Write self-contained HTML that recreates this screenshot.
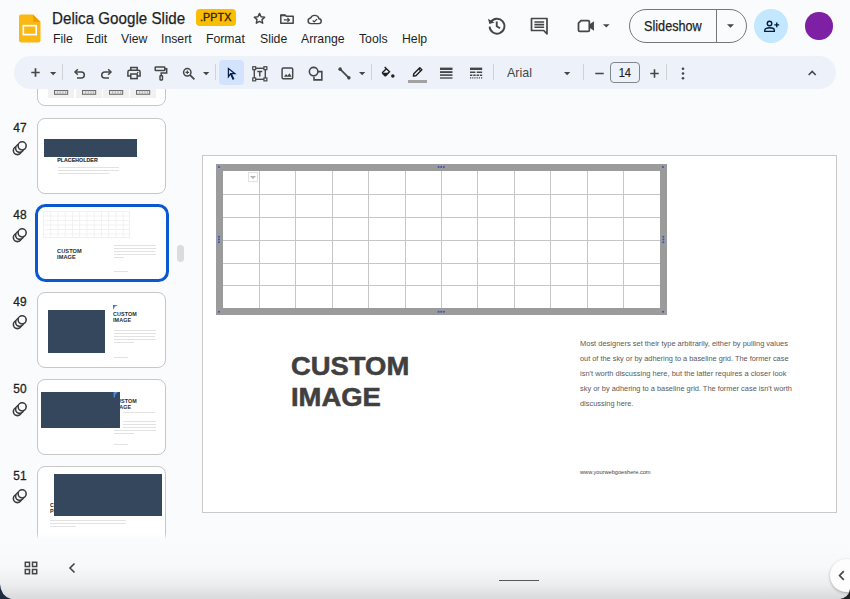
<!DOCTYPE html>
<html>
<head>
<meta charset="utf-8">
<title>Delica Google Slide</title>
<style>
*{box-sizing:border-box;margin:0;padding:0}
html,body{width:850px;height:599px;overflow:hidden}
body{background:#f9fbfd;font-family:"Liberation Sans",sans-serif;position:relative;color:#1f1f1f}
.abs{position:absolute}
svg{position:absolute;overflow:visible}
/* header */
#title{left:52.400px;top:7px;font-size:16.300px;line-height:22px;color:#1f1f1f;white-space:nowrap;transform-origin:0 50%;transform:scaleX(.931);-webkit-text-stroke:.25px #1f1f1f}
#badge{left:195.500px;top:9.300px;width:40.500px;height:17px;background:#fbbc04;border-radius:4px;font-size:10.700px;line-height:17.500px;text-align:center;color:#2e2400;letter-spacing:.15px;-webkit-text-stroke:.35px #2e2400}
.menu{top:31px;font-size:13px;line-height:16px;color:#1f1f1f;white-space:nowrap;transform-origin:0 50%;transform:scaleX(.942)}
#toolbar{left:14px;top:56px;width:822px;height:33px;border-radius:16.500px;background:#edf2fa}
.sep{top:64px;width:1px;height:16px;background:#cfd3d8}
#sel{left:219.400px;top:60.300px;width:24.800px;height:24.800px;border-radius:4px;background:#d3e3fd}
#fontname{left:506.800px;top:65px;font-size:13.500px;line-height:16px;color:#444746;transform-origin:0 50%;transform:scaleX(.925)}
#fsize{left:610px;top:62px;width:29.500px;height:21px;border:1px solid #80868b;border-radius:4px;font-size:12.300px;line-height:20px;text-align:center;color:#1f1f1f;-webkit-text-stroke:.2px #1f1f1f}
#fsize span{display:inline-block;transform:scaleX(.9)}
#slideshow{left:629px;top:9px;width:118px;height:34px;border:1px solid #747775;border-radius:17px}
#slideshow span{position:absolute;left:14px;top:8px;font-size:14px;line-height:16px;color:#1f1f1f;transform-origin:0 50%;transform:scaleX(.905);white-space:nowrap;-webkit-text-stroke:.25px #1f1f1f}
#slideshow i{position:absolute;left:86px;top:0;width:1px;height:32px;background:#747775}
#share{left:753.800px;top:8.800px;width:34.400px;height:34.400px;border-radius:50%;background:#c2e7ff}
#avatar{left:805.400px;top:12.300px;width:27.400px;height:27.400px;border-radius:50%;background:#7d20a4}
/* filmstrip */
.thumb{left:36.600px;width:129.800px;height:76px;background:#fff;border:1px solid #c7c7c7;border-radius:8px;overflow:hidden}
.num{left:13.200px;font-size:11.900px;line-height:14px;color:#1f1f1f;-webkit-text-stroke:.3px #1f1f1f;letter-spacing:.3px}
.tt{font-weight:bold;color:#2b2b2b;white-space:nowrap;letter-spacing:.1px;line-height:6px;height:6px;transform-origin:0 0;transform:scaleX(1.120)}
.tl{height:1px;background:#e2e2e2}
#tgrid{background-image:linear-gradient(to right,#f0f0f0 1px,transparent 1px),linear-gradient(to bottom,#f0f0f0 1px,transparent 1px);background-size:7.250px 4.500px;border-right:1px solid #f0f0f0;border-bottom:1px solid #f0f0f0}
/* canvas */
#slide{left:202px;top:155px;width:635px;height:358px;background:#fff;border:1px solid #c9c9c9}
#tbl{left:216px;top:164px;width:450.500px;height:151px;background:#9b9b9b}
#tblgrid{left:223px;top:170.600px;width:437px;height:137.800px;background:#fff;overflow:hidden}
#tblgrid i{position:absolute;background:#c6c6c6}
.hd{width:1.800px;height:1.800px;background:#3c5cb0}
#heading{left:291px;top:351.200px;-webkit-text-stroke:.55px #404040;font-size:26.500px;line-height:31.200px;font-weight:bold;color:#404040;white-space:nowrap;transform-origin:0 0;transform:scaleX(1.034)}
.para{left:580px;font-size:7.400px;line-height:10px;color:#595959;white-space:nowrap;transform-origin:0 50%}
#url{left:580px;top:467.500px;font-size:5.650px;line-height:8px;color:#444;white-space:nowrap}
#shade{left:0;top:540px;width:850px;height:59px;background:linear-gradient(to bottom,rgba(0,0,0,0) 0,rgba(0,0,0,.012) 45%,rgba(0,0,0,.055) 75%,rgba(0,0,0,.135) 100%)}
#fab{left:829.500px;top:558.500px;width:33px;height:33px;border-radius:50%;background:#fdfdfd;box-shadow:0 1px 3px rgba(0,0,0,.28)}
</style>
</head>
<body>
<!-- HEADER -->
<div class="abs" id="title">Delica Google Slide</div>
<div class="abs" id="badge">.PPTX</div>
<div class="abs menu" style="left:53px">File</div>
<div class="abs menu" style="left:86.2px">Edit</div>
<div class="abs menu" style="left:121px">View</div>
<div class="abs menu" style="left:160.5px">Insert</div>
<div class="abs menu" style="left:206.3px">Format</div>
<div class="abs menu" style="left:259.6px">Slide</div>
<div class="abs menu" style="left:300.5px">Arrange</div>
<div class="abs menu" style="left:359.2px">Tools</div>
<div class="abs menu" style="left:401.6px">Help</div>

<!-- logo -->
<svg style="left:18.500px;top:13.500px" width="21.500" height="29" viewBox="0 0 23 30">
 <path d="M2.5 0H15L23 8V27.5Q23 30 20.500 30H2.500Q0 30 0 27.500V2.500Q0 0 2.500 0Z" fill="#fbb712"/>
 <path d="M15 0L23 8H17Q15 8 15 6Z" fill="#ee9d06"/>
 <rect x="4.600" y="12" width="13.800" height="9.500" fill="none" stroke="#fff" stroke-width="1.800"/>
</svg>
<!-- star -->
<svg style="left:252.200px;top:11.400px" width="15" height="15" viewBox="0 0 24 24"><path d="M12 3.800l2.500 5.300 5.800.700-4.300 4 1.100 5.700L12 16.600l-5.100 2.900 1.100-5.700-4.300-4 5.800-.7z" fill="none" stroke="#444746" stroke-width="2.300" stroke-linejoin="round"/></svg>
<!-- move folder -->
<svg style="left:280px;top:14px" width="14" height="10" viewBox="0 0 14 10"><path d="M.8 1h4.200l1.300 1.300h6.900v6.900H.8z" fill="none" stroke="#444746" stroke-width="1.500" stroke-linejoin="round"/><path d="M.8 1.500h4.500" stroke="#444746" stroke-width="1.600"/><path d="M3.800 5.900h5.400M7.400 3.900l2 2-2 2" fill="none" stroke="#444746" stroke-width="1.300"/></svg>
<!-- cloud done -->
<svg style="left:306.600px;top:14.600px" width="15.600" height="9.400" viewBox="0 0 15.600 10" preserveAspectRatio="none"><path d="M4 9.200a3 3 0 0 1-.3-5.970 4.300 4.300 0 0 1 8.300.8 2.600 2.600 0 0 1-.2 5.170z" fill="none" stroke="#444746" stroke-width="1.500" stroke-linejoin="round"/><path d="M5.700 5.800l1.500 1.500 2.800-2.900" fill="none" stroke="#444746" stroke-width="1.300"/></svg>
<!-- history -->
<svg style="left:486.300px;top:15.200px" width="21.500" height="21.500" viewBox="0 0 24 24"><path d="M5.200 8.200A8.300 8.300 0 1 1 4 13" fill="none" stroke="#444746" stroke-width="2.100"/><path d="M2.200 4.200l1.600 5.800 5.700-1.500z" fill="#444746"/><path d="M12 7.300v5.200l3.700 2.300" fill="none" stroke="#444746" stroke-width="2.100"/></svg>
<!-- comment -->
<svg style="left:530px;top:16.500px" width="19" height="19" viewBox="0 0 19 19"><path d="M1.500 1.500h15.500v15.300l-3.300-3.300H1.500z" fill="none" stroke="#444746" stroke-width="1.700" stroke-linejoin="round"/><path d="M4.400 5h9.700M4.400 7.600h9.700M4.400 10.200h9.700" stroke="#444746" stroke-width="1.600"/></svg>
<!-- camera -->
<svg style="left:575.500px;top:16px" width="20" height="20" viewBox="0 0 24 24"><path d="M6 5.500h8.500q1.500 0 1.500 1.500v10q0 1.500-1.500 1.500H4.500q-1.500 0-1.500-1.500V8.500z" fill="none" stroke="#444746" stroke-width="2.100" stroke-linejoin="round"/><path d="M16 10.300l5.500-4v11.400l-5.500-4z" fill="#444746"/></svg>
<svg style="left:603px;top:24px" width="6.600" height="3.600" viewBox="0 0 10 5"><path d="M0 0h10L5 5z" fill="#444746"/></svg>
<!-- slideshow dropdown -->
<svg style="left:727.200px;top:24px" width="7" height="3.800" viewBox="0 0 10 5"><path d="M0 0h10L5 5z" fill="#444746"/></svg>
<div class="abs" id="slideshow"><span>Slideshow</span><i></i></div>
<div class="abs" id="share"></div>
<div class="abs" id="avatar"></div>
<!-- share person add -->
<svg style="left:762.800px;top:17.600px" width="16.500" height="16.500" viewBox="0 0 24 24"><circle cx="9.500" cy="8" r="3.300" fill="none" stroke="#001d35" stroke-width="2"/><path d="M2.500 19.500v-1.500c0-2.500 4-3.800 7-3.800s7 1.300 7 3.800v1.500z" fill="none" stroke="#001d35" stroke-width="2" stroke-linejoin="round"/><path d="M20 6.500v7M16.500 10h7" stroke="#001d35" stroke-width="2"/></svg>

<!-- TOOLBAR -->
<div class="abs" id="toolbar"></div>
<div class="abs" id="sel"></div>
<div class="abs sep" style="left:62px"></div>
<div class="abs sep" style="left:215px"></div>
<div class="abs sep" style="left:371px"></div>
<div class="abs sep" style="left:493px"></div>
<div class="abs sep" style="left:583px"></div>
<div class="abs sep" style="left:666px"></div>
<div class="abs" id="fontname">Arial</div>
<div class="abs" id="fsize"><span>14</span></div>

<!-- plus -->
<svg style="left:30.500px;top:68.300px" width="9" height="9" viewBox="0 0 10 10"><path d="M5 .3v9.400M.3 5h9.400" stroke="#444746" stroke-width="1.900"/></svg>
<svg style="left:50.4px;top:72.300px" width="6.300" height="3.400" viewBox="0 0 10 5"><path d="M0 0h10L5 5z" fill="#444746"/></svg>
<!-- undo -->
<svg style="left:73px;top:67px" width="13" height="13" viewBox="0 0 13 13"><path d="M2 5h6.300a3 3 0 0 1 0 6H4" fill="none" stroke="#444746" stroke-width="1.500"/><path d="M4.800 2.200L2 5l2.800 2.800" fill="none" stroke="#444746" stroke-width="1.500"/></svg>
<!-- redo -->
<svg style="left:100px;top:67px" width="13" height="13" viewBox="0 0 13 13"><path d="M11 5H4.700a3 3 0 0 0 0 6H9" fill="none" stroke="#444746" stroke-width="1.500"/><path d="M8.200 2.200L11 5 8.200 7.800" fill="none" stroke="#444746" stroke-width="1.500"/></svg>
<!-- print -->
<svg style="left:127px;top:66px" width="14" height="14" viewBox="0 0 14 14"><path d="M3.800 4.300V1.500h6.400v2.800" fill="none" stroke="#444746" stroke-width="1.500"/><path d="M3.500 10H.9V6q0-1.700 1.700-1.700h8.800q1.700 0 1.700 1.700v4h-2.600" fill="none" stroke="#444746" stroke-width="1.500"/><rect x="3.800" y="8" width="6.400" height="4.600" fill="none" stroke="#444746" stroke-width="1.500"/><circle cx="10.700" cy="6.500" r=".8" fill="#444746"/></svg>
<!-- paint format -->
<svg style="left:154px;top:66px" width="14" height="15" viewBox="0 0 14 15"><rect x="1.200" y="1" width="9.600" height="3.600" rx=".6" fill="none" stroke="#444746" stroke-width="1.500"/><path d="M10.800 2.800h1.900v4.100H7.200v3" fill="none" stroke="#444746" stroke-width="1.500"/><rect x="6" y="9.700" width="2.500" height="4.300" rx=".4" fill="none" stroke="#444746" stroke-width="1.400"/></svg>
<!-- zoom -->
<svg style="left:181.500px;top:66.500px" width="14" height="14" viewBox="0 0 14 14"><circle cx="5.300" cy="5.300" r="3.700" fill="none" stroke="#444746" stroke-width="1.500"/><path d="M8.100 8.100l4.300 4.300" stroke="#444746" stroke-width="1.800"/><path d="M5.300 3.500v3.600M3.500 5.300h3.600" stroke="#444746" stroke-width="1.200"/></svg>
<svg style="left:203.4px;top:72.300px" width="6.300" height="3.400" viewBox="0 0 10 5"><path d="M0 0h10L5 5z" fill="#444746"/></svg>
<!-- cursor -->
<svg style="left:224px;top:65.700px" width="15.200" height="15.200" viewBox="0 -960 960 960"><path d="m320-410 79-110h170L320-716v306ZM551-80 406-392 240-160v-720l560 440H516l144 309-109 51Z" fill="#041e49"/></svg>
<!-- textbox -->
<svg style="left:251.700px;top:65.800px" width="15.600" height="15.600" viewBox="0 0 17 17"><rect x="2.500" y="2.500" width="12" height="12" fill="none" stroke="#444746" stroke-width="1.500"/><g fill="#edf2fa" stroke="#444746" stroke-width="1.300"><rect x=".8" y=".8" width="3.200" height="3.200"/><rect x="13" y=".8" width="3.200" height="3.200"/><rect x=".8" y="13" width="3.200" height="3.200"/><rect x="13" y="13" width="3.200" height="3.200"/></g><path d="M5.800 6h5.400M8.500 6v5.500" stroke="#444746" stroke-width="1.600"/></svg>
<!-- image -->
<svg style="left:280.700px;top:66.800px" width="12.800" height="12.800" viewBox="0 0 14 14"><rect x="1.200" y="1.200" width="11.600" height="11.600" rx="1.300" fill="none" stroke="#444746" stroke-width="1.600"/><path d="M3.200 10.600l2.300-3 1.700 2 2.100-2.800 2.400 3.800z" fill="#444746"/></svg>
<!-- shape -->
<svg style="left:308.300px;top:66px" width="15.500" height="15.500" viewBox="0 0 16 16"><path d="M9.300 5.800h5v8.500H6.200v-3" fill="none" stroke="#444746" stroke-width="1.600"/><circle cx="5.800" cy="5.800" r="4.400" fill="#edf2fa" stroke="#444746" stroke-width="1.600"/></svg>
<!-- line -->
<svg style="left:337.500px;top:66.700px" width="13" height="13" viewBox="0 0 14 14"><path d="M2.300 2.300l9.400 9.400" stroke="#444746" stroke-width="1.900"/><circle cx="2.300" cy="2.300" r="1.900" fill="#444746"/><circle cx="11.700" cy="11.700" r="1.900" fill="#444746"/></svg>
<svg style="left:359.4px;top:72.300px" width="6.300" height="3.400" viewBox="0 0 10 5"><path d="M0 0h10L5 5z" fill="#444746"/></svg>
<!-- fill -->
<svg style="left:382px;top:65.500px" width="12.500" height="12.500" viewBox="0 0 15 15"><path d="M3.200 1.200l5.800 5.800-4.300 4.300q-.7.700-1.400 0L.9 8.900q-.7-.7 0-1.400l4-4" fill="none" stroke="#1f1f1f" stroke-width="1.700"/><path d="M1 8.200h7L4.700 11.500q-.7.600-1.400 0z" fill="#1f1f1f"/><circle cx="13" cy="12.100" r="2.100" fill="#1f1f1f"/></svg>
<!-- pen -->
<svg style="left:411.500px;top:66.200px" width="11.500" height="11.500" viewBox="0 0 14 14"><path d="M1.700 12.300l.5-3 7.300-7.300 2.500 2.500-7.300 7.300z" fill="none" stroke="#1f1f1f" stroke-width="1.700" stroke-linejoin="round"/><path d="M8 3.500l2.500 2.500" stroke="#1f1f1f" stroke-width="1.400"/></svg>
<div class="abs" style="left:408px;top:79.700px;width:18.800px;height:3.100px;background:#a2a2a2"></div>
<!-- line weight -->
<svg style="left:440px;top:67px" width="12.500" height="12" viewBox="0 0 12.500 12"><path d="M0 1.800h12.500" stroke="#444746" stroke-width="2.400"/><path d="M0 5.100h12.500" stroke="#444746" stroke-width="1.900"/><path d="M0 8.100h12.500" stroke="#444746" stroke-width="1.600"/><path d="M0 11h12.500" stroke="#444746" stroke-width="1.350"/></svg>
<!-- line dash -->
<svg style="left:469.500px;top:67px" width="12.200" height="12" viewBox="0 0 12.200 12"><path d="M0 1.800h12.200" stroke="#444746" stroke-width="2.400"/><path d="M0 5.300h12.200" stroke="#444746" stroke-width="1.600" stroke-dasharray="5.400 1.400"/><path d="M0 8.200h12.200" stroke="#444746" stroke-width="1.400" stroke-dasharray="2.400 .86"/><path d="M0 10.900h12.200" stroke="#444746" stroke-width="1.200" stroke-dasharray="1.200 1"/></svg>
<svg style="left:563.7px;top:72.300px" width="6.300" height="3.400" viewBox="0 0 10 5"><path d="M0 0h10L5 5z" fill="#444746"/></svg>
<!-- minus / plus -->
<svg style="left:594.700px;top:68.500px" width="9" height="9" viewBox="0 0 10 10"><path d="M.3 5h9.400" stroke="#444746" stroke-width="1.700"/></svg>
<svg style="left:649.500px;top:68.500px" width="9" height="9" viewBox="0 0 10 10"><path d="M5 .3v9.400M.3 5h9.400" stroke="#444746" stroke-width="1.800"/></svg>
<!-- more -->
<svg style="left:681px;top:67px" width="4" height="13" viewBox="0 0 4 13"><circle cx="2" cy="1.800" r="1.300" fill="#444746"/><circle cx="2" cy="6.500" r="1.300" fill="#444746"/><circle cx="2" cy="11.200" r="1.300" fill="#444746"/></svg>
<!-- collapse caret -->
<svg style="left:807.900px;top:70.300px" width="8.400" height="5.900" viewBox="0 0 10 7"><path d="M.8 6l4.200-4.300L9.200 6" fill="none" stroke="#444746" stroke-width="1.900"/></svg>
<!-- FILMSTRIP -->
<div class="abs" id="film" style="left:0;top:89px;width:200px;height:449.500px;overflow:hidden"><div class="abs" style="left:0;top:2px;width:200px;height:460px">
 <div class="abs thumb" style="top:-61px"></div>
 <!-- 46 mini boxes -->
 <div class="abs" style="left:48.4px;top:-4px;width:26px;height:10.500px;background:#f1f1f1"></div>
 <svg style="left:54.3px;top:-1.400px" width="14.200" height="4.800" viewBox="0 0 14.200 4.800"><rect x=".5" y=".5" width="13.200" height="3.800" fill="#e4e4e4" stroke="#6b6b6b" stroke-width="1"/><path d="M3.600 .5v3.800M6.300 .5v3.800M9 .5v3.800M11.600 .5v3.800" stroke="#9a9a9a" stroke-width=".6"/></svg>
 <div class="abs" style="left:76.0px;top:-4px;width:26px;height:10.500px;background:#f1f1f1"></div>
 <svg style="left:81.9px;top:-1.400px" width="14.200" height="4.800" viewBox="0 0 14.200 4.800"><rect x=".5" y=".5" width="13.200" height="3.800" fill="#e4e4e4" stroke="#6b6b6b" stroke-width="1"/><path d="M3.600 .5v3.800M6.300 .5v3.800M9 .5v3.800M11.600 .5v3.800" stroke="#9a9a9a" stroke-width=".6"/></svg>
 <div class="abs" style="left:103.1px;top:-4px;width:26px;height:10.500px;background:#f1f1f1"></div>
 <svg style="left:109.0px;top:-1.400px" width="14.200" height="4.800" viewBox="0 0 14.200 4.800"><rect x=".5" y=".5" width="13.200" height="3.800" fill="#e4e4e4" stroke="#6b6b6b" stroke-width="1"/><path d="M3.600 .5v3.800M6.300 .5v3.800M9 .5v3.800M11.600 .5v3.800" stroke="#9a9a9a" stroke-width=".6"/></svg>
 <div class="abs" style="left:130.1px;top:-4px;width:26px;height:10.500px;background:#f1f1f1"></div>
 <svg style="left:136.0px;top:-1.400px" width="14.200" height="4.800" viewBox="0 0 14.200 4.800"><rect x=".5" y=".5" width="13.200" height="3.800" fill="#e4e4e4" stroke="#6b6b6b" stroke-width="1"/><path d="M3.600 .5v3.800M6.300 .5v3.800M9 .5v3.800M11.600 .5v3.800" stroke="#9a9a9a" stroke-width=".6"/></svg>

 <!-- 47 -->
 <div class="abs num" style="top:29.8px">47</div>
 <div class="abs thumb" style="top:27px">
  <div class="abs" style="left:6.500px;top:19.700px;width:92.700px;height:18.100px;background:#35475c"></div>
  <div class="abs tt" style="left:19.600px;top:38.200px;font-size:5.200px;transform:scaleX(1);-webkit-text-stroke:.15px #2b2b2b">PLACEHOLDER</div>
  <div class="abs tl" style="left:20px;top:48px;width:61px"></div>
  <div class="abs tl" style="left:20px;top:51px;width:61px"></div>
  <div class="abs tl" style="left:20px;top:54px;width:51px"></div>
 </div>
 <!-- 48 selected -->
 <div class="abs num" style="top:116.8px">48</div>
 <div class="abs" style="left:34.800px;top:112.600px;width:134.400px;height:78.800px;background:#fff;border:3px solid #0b57d0;border-radius:10.500px;overflow:hidden">
  <div class="abs" id="tgrid" style="left:5.500px;top:4px;width:87px;height:27px"></div>
  <div class="abs tt" style="left:19.200px;top:41px;font-size:5px">CUSTOM</div><div class="abs tt" style="left:19.200px;top:47.100px;font-size:5px">IMAGE</div>
  <div class="abs tl" style="left:76px;top:38px;width:42px"></div>
  <div class="abs tl" style="left:76px;top:41px;width:42px"></div>
  <div class="abs tl" style="left:76px;top:44px;width:41px"></div>
  <div class="abs tl" style="left:76px;top:47px;width:42px"></div>
  <div class="abs tl" style="left:76px;top:50px;width:10px"></div>
  <div class="abs tl" style="left:76px;top:64px;width:14px"></div>
 </div>
 <!-- 49 -->
 <div class="abs num" style="top:203.8px">49</div>
 <div class="abs thumb" style="top:201px">
  <div class="abs" style="left:10.200px;top:17px;width:57.400px;height:43.200px;background:#35475c"></div>
  <svg style="left:75px;top:11.500px" width="5" height="5" viewBox="0 0 5 5"><path d="M0 0h5L1.800 1.800 0 5z" fill="#3b82d6"/></svg>
  <div class="abs tt" style="left:75.500px;top:18.5px;font-size:4.800px">CUSTOM</div><div class="abs tt" style="left:75.500px;top:24.6px;font-size:4.800px">IMAGE</div>
  <div class="abs tl" style="left:76px;top:37px;width:42px"></div>
  <div class="abs tl" style="left:76px;top:40px;width:42px"></div>
  <div class="abs tl" style="left:76px;top:43px;width:41px"></div>
  <div class="abs tl" style="left:76px;top:46px;width:42px"></div>
  <div class="abs tl" style="left:76px;top:49px;width:20px"></div>
  <div class="abs tl" style="left:76px;top:64px;width:14px"></div>
 </div>
 <!-- 50 -->
 <div class="abs num" style="top:290.8px">50</div>
 <div class="abs thumb" style="top:288px">
  <svg style="left:75px;top:11.500px" width="5" height="5" viewBox="0 0 5 5"><path d="M0 0h5L1.800 1.800 0 5z" fill="#3b82d6"/></svg>
  <div class="abs tt" style="left:75.500px;top:18.5px;font-size:4.800px">CUSTOM</div><div class="abs tt" style="left:75.500px;top:24.6px;font-size:4.800px">IMAGE</div>
  <div class="abs" style="left:3.600px;top:11.600px;width:78.800px;height:36.300px;background:#35475c"></div>
  <svg style="left:75.200px;top:11.600px" width="5" height="5.500" viewBox="0 0 5 5.500"><path d="M.6 0H5L2.700 2 1.600 5.500H.6z" fill="#4a8fe0"/></svg>
  <div class="abs tl" style="left:85px;top:32px;width:32px"></div>
  <div class="abs tl" style="left:85px;top:41px;width:33px"></div>
  <div class="abs tl" style="left:85px;top:44px;width:33px"></div>
  <div class="abs tl" style="left:85px;top:47px;width:33px"></div>
  <div class="abs tl" style="left:76px;top:50px;width:42px"></div>
  <div class="abs tl" style="left:76px;top:53px;width:20px"></div>
  <div class="abs tl" style="left:76px;top:64px;width:14px"></div>
 </div>
 <!-- 51 -->
 <div class="abs num" style="top:377.8px">51</div>
 <div class="abs thumb" style="top:375px;height:90px">
  <div class="abs tt" style="left:12.500px;top:36.0px;font-size:4.800px">CUSTOM</div><div class="abs tt" style="left:12.500px;top:42.1px;font-size:4.800px">PLACEHOLDER</div>
  <div class="abs" style="left:16.200px;top:6.800px;width:108.600px;height:41.800px;background:#35475c"></div>
  <div class="abs tl" style="left:12.500px;top:53px;width:76px"></div>
  <div class="abs tl" style="left:12.500px;top:56px;width:76px"></div>
  <div class="abs tl" style="left:12.500px;top:59px;width:26px"></div>
 </div>
</div><div class="abs" style="left:30px;bottom:0;width:150px;height:5px;background:linear-gradient(to bottom,rgba(249,251,253,0),#f9fbfd)"></div></div>
<!-- link icons -->
<svg style="left:11px;top:138.8px" width="18" height="18" viewBox="0 0 16 16"><g fill="#f9fbfd" stroke="#3a3a3a" stroke-width="1.400"><circle cx="5.700" cy="10.300" r="3.600"/><circle cx="7.700" cy="8.300" r="3.600"/><circle cx="9.900" cy="6.100" r="3.600"/></g></svg>
<svg style="left:11px;top:225.8px" width="18" height="18" viewBox="0 0 16 16"><g fill="#f9fbfd" stroke="#3a3a3a" stroke-width="1.400"><circle cx="5.700" cy="10.300" r="3.600"/><circle cx="7.700" cy="8.300" r="3.600"/><circle cx="9.900" cy="6.100" r="3.600"/></g></svg>
<svg style="left:11px;top:312.8px" width="18" height="18" viewBox="0 0 16 16"><g fill="#f9fbfd" stroke="#3a3a3a" stroke-width="1.400"><circle cx="5.700" cy="10.300" r="3.600"/><circle cx="7.700" cy="8.300" r="3.600"/><circle cx="9.900" cy="6.100" r="3.600"/></g></svg>
<svg style="left:11px;top:399.8px" width="18" height="18" viewBox="0 0 16 16"><g fill="#f9fbfd" stroke="#3a3a3a" stroke-width="1.400"><circle cx="5.700" cy="10.300" r="3.600"/><circle cx="7.700" cy="8.300" r="3.600"/><circle cx="9.900" cy="6.100" r="3.600"/></g></svg>
<svg style="left:11px;top:486.8px" width="18" height="18" viewBox="0 0 16 16"><g fill="#f9fbfd" stroke="#3a3a3a" stroke-width="1.400"><circle cx="5.700" cy="10.300" r="3.600"/><circle cx="7.700" cy="8.300" r="3.600"/><circle cx="9.900" cy="6.100" r="3.600"/></g></svg>
<!-- filmstrip scrollbar -->
<div class="abs" style="left:177px;top:245px;width:6.500px;height:17px;border-radius:3.500px;background:#dadce0"></div>
<!-- bottom-left controls -->
<svg style="left:24px;top:561px" width="14" height="14" viewBox="0 0 14 14"><g fill="none" stroke="#444746" stroke-width="1.500"><rect x="1.300" y="1.300" width="4.200" height="4.200"/><rect x="8.500" y="1.300" width="4.200" height="4.200"/><rect x="1.300" y="8.500" width="4.200" height="4.200"/><rect x="8.500" y="8.500" width="4.200" height="4.200"/></g></svg>
<svg style="left:68px;top:562px" width="8" height="12" viewBox="0 0 8 12"><path d="M6.500 1.500L2 6l4.500 4.500" fill="none" stroke="#444746" stroke-width="1.600"/></svg>

<!-- CANVAS -->
<div class="abs" id="slide"></div>
<!-- table -->
<div class="abs" id="tbl"></div>
<div class="abs" id="tblgrid"><i style="left:36px;top:0;width:1px;height:140px"></i><i style="left:72px;top:0;width:1px;height:140px"></i><i style="left:109px;top:0;width:1px;height:140px"></i><i style="left:145px;top:0;width:1px;height:140px"></i><i style="left:182px;top:0;width:1px;height:140px"></i><i style="left:218px;top:0;width:1px;height:140px"></i><i style="left:254px;top:0;width:1px;height:140px"></i><i style="left:291px;top:0;width:1px;height:140px"></i><i style="left:327px;top:0;width:1px;height:140px"></i><i style="left:364px;top:0;width:1px;height:140px"></i><i style="left:400px;top:0;width:1px;height:140px"></i><i style="left:0;top:23px;width:437px;height:1px"></i><i style="left:0;top:46px;width:437px;height:1px"></i><i style="left:0;top:69px;width:437px;height:1px"></i><i style="left:0;top:92px;width:437px;height:1px"></i><i style="left:0;top:114px;width:437px;height:1px"></i></div>
<!-- cell dropdown -->
<div class="abs" style="left:247.500px;top:172px;width:10.500px;height:10px;border:1px solid #e2e2e2;background:#fff"></div>
<svg style="left:250px;top:176px" width="6" height="3" viewBox="0 0 10 5"><path d="M0 0h10L5 5z" fill="#b5b5b5"/></svg>
<!-- handles -->
<svg style="left:0;top:0" width="850" height="599" viewBox="0 0 850 599"><g fill="#3558b8"><circle cx="438.6" cy="167.0" r="1.050"/><circle cx="441.2" cy="167.0" r="1.050"/><circle cx="443.9" cy="167.0" r="1.050"/><circle cx="438.6" cy="311.8" r="1.050"/><circle cx="441.2" cy="311.8" r="1.050"/><circle cx="443.9" cy="311.8" r="1.050"/><circle cx="219.0" cy="236.8" r="1.050"/><circle cx="219.0" cy="239.5" r="1.050"/><circle cx="219.0" cy="242.2" r="1.050"/><circle cx="663.3" cy="236.8" r="1.050"/><circle cx="663.3" cy="239.5" r="1.050"/><circle cx="663.3" cy="242.2" r="1.050"/><circle cx="219.0" cy="167.0" r="1.050"/><circle cx="663.0" cy="167.0" r="1.050"/><circle cx="219.0" cy="311.7" r="1.050"/><circle cx="663.0" cy="311.7" r="1.050"/></g></svg>
<!-- heading -->
<div class="abs" id="heading">CUSTOM<br>IMAGE</div>
<!-- paragraph -->
<div class="abs para" style="top:338.700px;transform:scaleX(1.0112)">Most designers set their type arbitrarily, either by pulling values</div>
<div class="abs para" style="top:354.200px;transform:scaleX(.9957)">out of the sky or by adhering to a baseline grid. The former case</div>
<div class="abs para" style="top:369.100px;transform:scaleX(1.0123)">isn't worth discussing here, but the latter requires a closer look</div>
<div class="abs para" style="top:383.800px;transform:scaleX(1.0014)">sky or by adhering to a baseline grid. The former case isn't worth</div>
<div class="abs para" style="top:399px">discussing here.</div>
<div class="abs" id="url">www.yourwebgoeshere.com</div>
<!-- bottom -->
<div class="abs" style="left:498.500px;top:579.700px;width:40.700px;height:1.800px;background:#585b5f"></div>
<div class="abs" id="shade"></div>
<div class="abs" id="fab"></div>
<svg style="left:838px;top:569.500px" width="7" height="11" viewBox="0 0 7 11"><path d="M5.800 1.200L1.600 5.500l4.200 4.300" fill="none" stroke="#444746" stroke-width="1.700"/></svg>
<!-- window corners -->
<svg style="left:0;top:584px" width="11" height="15" viewBox="0 0 11 15"><path d="M0 0Q.8 12 11 15H0z" fill="#1d2b40"/></svg>
<svg style="left:840px;top:589px" width="10" height="10" viewBox="0 0 10 10"><path d="M10 0Q9 8 0 10H10z" fill="#222"/></svg>
</body>
</html>
